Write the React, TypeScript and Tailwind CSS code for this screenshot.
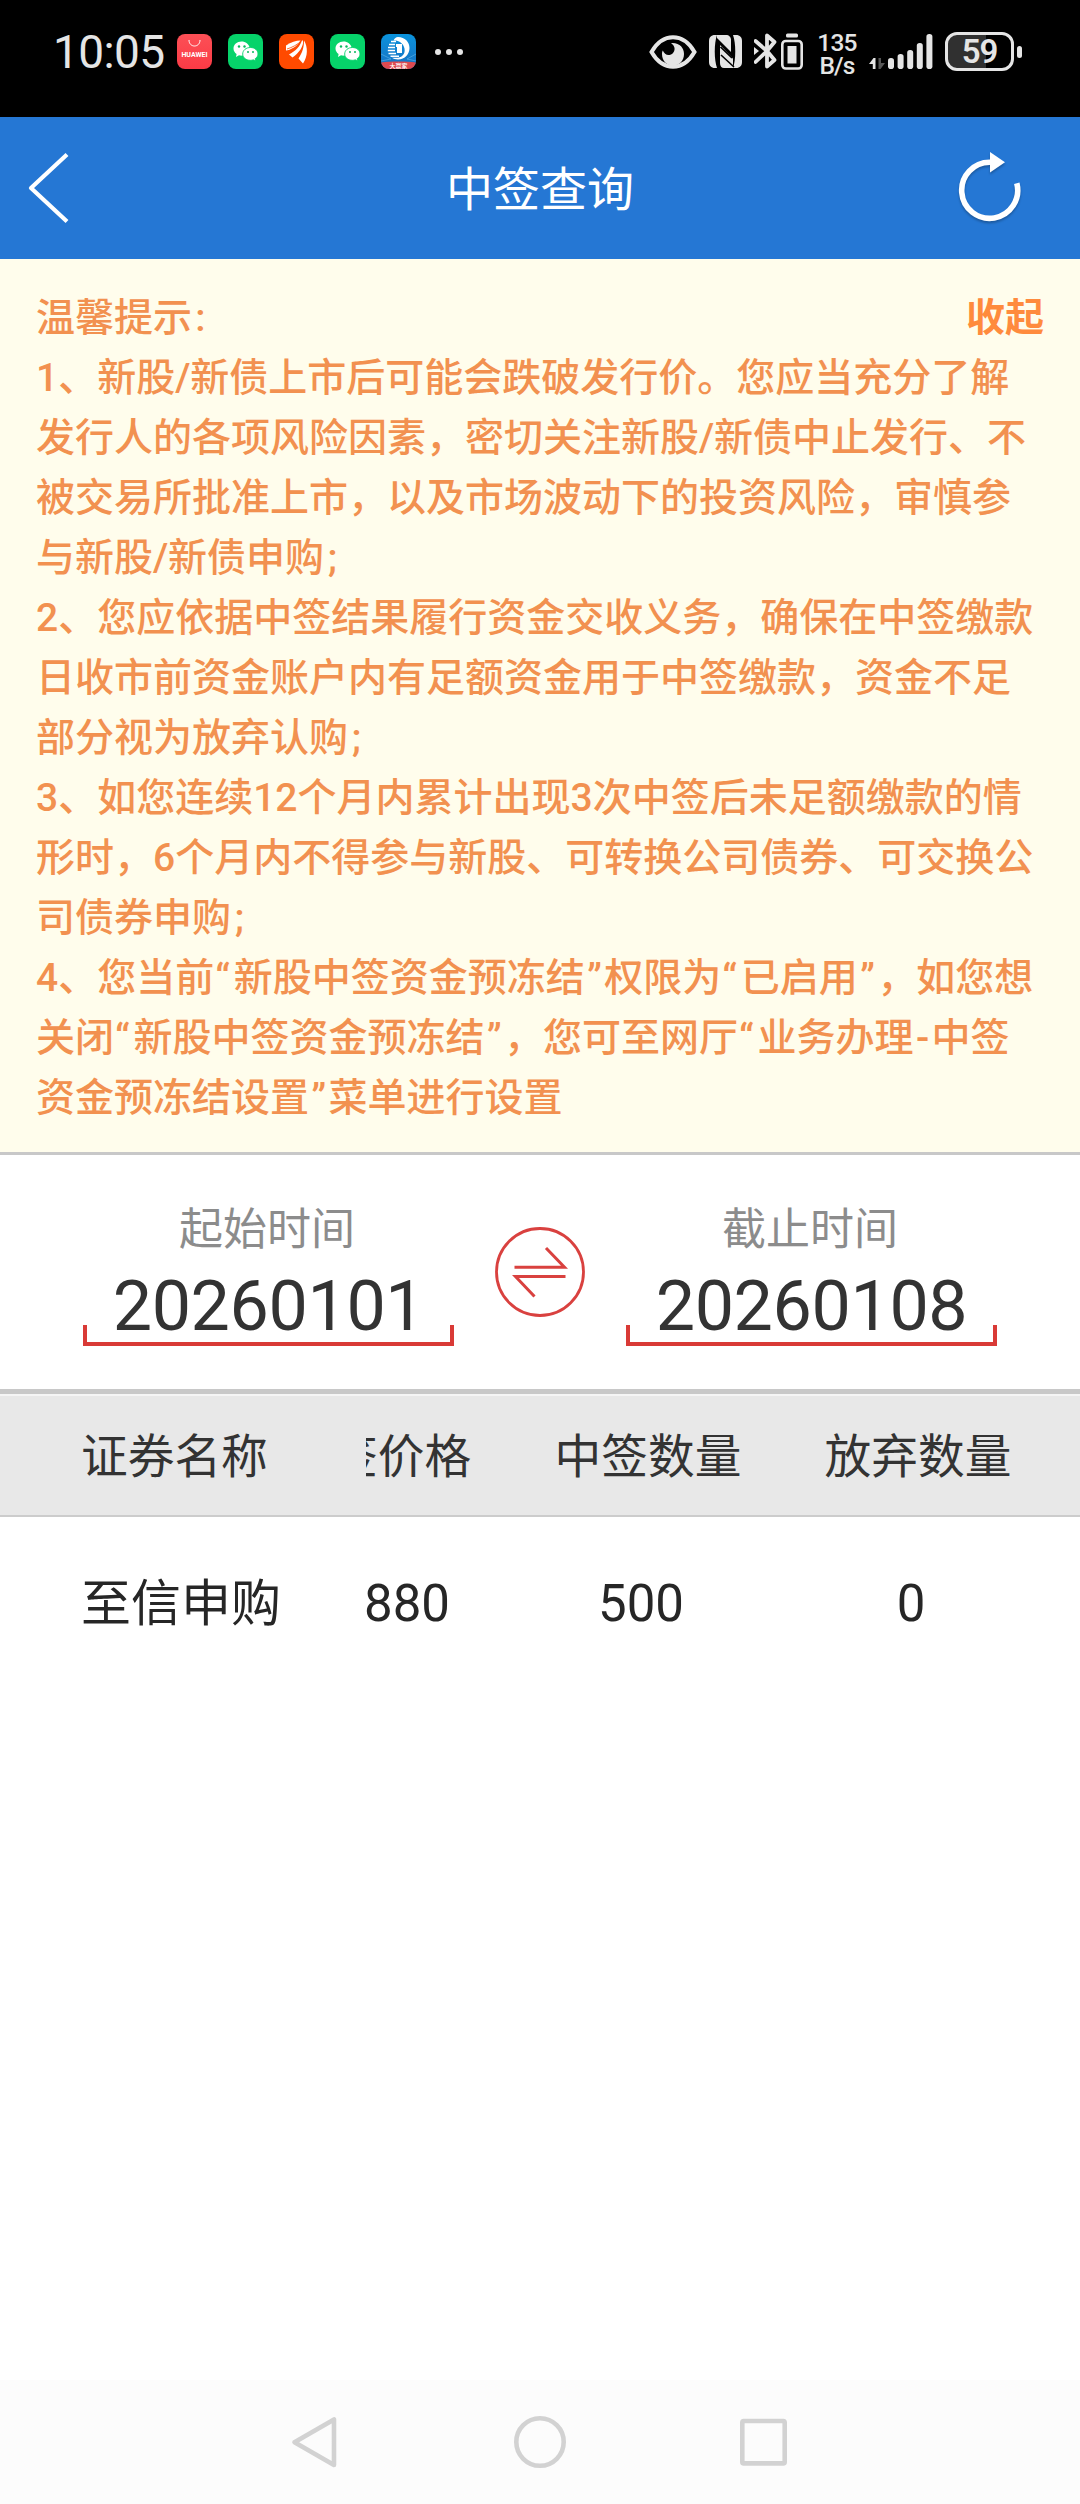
import type { ReactNode } from 'react';

const NOTICE_LINES = [
  '1、新股/新债上市后可能会跌破发行价。您应当充分了解',
  '发行人的各项风险因素，密切关注新股/新债中止发行、不',
  '被交易所批准上市，以及市场波动下的投资风险，审慎参',
  '与新股/新债申购;',
  '2、您应依据中签结果履行资金交收义务，确保在中签缴款',
  '日收市前资金账户内有足额资金用于中签缴款，资金不足',
  '部分视为放弃认购;',
  '3、如您连续12个月内累计出现3次中签后未足额缴款的情',
  '形时，6个月内不得参与新股、可转换公司债券、可交换公',
  '司债券申购;',
  '4、您当前“新股中签资金预冻结”权限为“已启用”，如您想',
  '关闭“新股中签资金预冻结”，您可至网厅“业务办理-中签',
  '资金预冻结设置”菜单进行设置',
];

// Fixed advance widths for the narrow punctuation between Chinese characters
const PUNCTUATION: Record<string, string> = {
  '“': 'w-[19.5px] pl-px text-left',
  '”': 'w-[19.5px] text-center',
  '/': 'w-[15px] text-center',
  '-': 'w-[18px] text-center',
  ':': 'w-[17px] text-center',
  ';': 'w-[17px] text-center',
};

export default function App() {
  return (
    <div className="flex h-[2504px] w-[1080px] flex-col overflow-hidden bg-white font-[Roboto,'Noto_Sans_CJK_SC',sans-serif] text-[#333]">
      <StatusBar />
      <TitleBar />
      <Notice />
      <DateRange />
      <ResultTable />
      <NavigationBar />
    </div>
  );
}

function StatusBar() {
  return (
    <div className="flex h-[117px] shrink-0 items-start bg-black text-[#e5e5e5]">
      <span className="mt-[29px] ml-[53px] w-[124px] text-[46px] leading-[47px] tracking-[-0.6px] whitespace-nowrap">
        10:05
      </span>
      <div className="mt-[34px] flex gap-4">
        <HuaweiIcon />
        <WeChatIcon />
        <FeatherIcon />
        <WeChatIcon />
        <BrokerIcon />
      </div>
      <div className="mt-[49px] ml-[19px] flex gap-[5px]">
        <span className="size-1.5 rounded-full bg-[#e5e5e5]" />
        <span className="size-1.5 rounded-full bg-[#e5e5e5]" />
        <span className="size-1.5 rounded-full bg-[#e5e5e5]" />
      </div>

      <div className="mt-8 mr-[58px] ml-auto flex items-start">
        <svg className="mt-[3px] h-[34px] w-12" viewBox="0 0 48 34" fill="none">
          <path d="M2.500 17C8 7.500 15.500 2.300 24 2.300S40 7.500 45.500 17C40 26.500 32.500 31.700 24 31.700S8 26.500 2.500 17Z" stroke="#e5e5e5" strokeWidth="4" />
          <path d="M23.500 8C31 8 35 13 35 19C35 26 30 30.500 24 30.500S13 26 13 19C13 17.500 13.300 16.500 13.800 15.500C15 18.500 17.500 20.500 20.500 20C25 19.300 27 14 24.500 10.500C23.800 9.500 23 8.800 22 8.200Z" fill="#e5e5e5" />
        </svg>
        <svg className="mt-[3px] ml-3 h-[33px] w-[33px]" viewBox="0 0 33 33">
          <path d="M6 0H8C5 8 5 25 8 33H6C2 33 0 30.500 0 27V6C0 2.500 2 0 6 0Z" fill="#e5e5e5" />
          <path d="M8 0H17C20 0 22 2 22 5V17L8 3Z" fill="#e5e5e5" />
          <path d="M24 0H27C31 0 33 2.500 33 6V27C33 30.500 31 33 27 33H24C27 25 27 8 24 0Z" fill="#e5e5e5" />
          <path d="M11 10L24 23.500V33H15C12.500 33 11 31 11 28Z" fill="#e5e5e5" />
          <path d="M11.500 12L23 23M12 20L25 32" stroke="#000" strokeWidth="1.600" />
        </svg>
        <svg className="mt-px ml-3 h-9 w-[23px]" viewBox="0 0 23 36" fill="none" stroke="#e5e5e5" strokeWidth="3.800" strokeLinejoin="round">
          <path d="M1.500 8L13 18L20.500 9L13 2.500V33.500L20.500 27L13 18L1.500 29" strokeLinecap="round" />
          <path d="M0 14L5 18L0 22Z" fill="#e5e5e5" stroke="none" />
        </svg>
        <svg className="mt-px ml-1 h-[37px] w-[22px]" viewBox="0 0 22 37">
          <rect x="5" y="0.500" width="12" height="4" rx="1.500" fill="#e5e5e5" />
          <rect x="1.300" y="8" width="19.400" height="27.500" rx="3.500" fill="none" stroke="#e5e5e5" strokeWidth="2.600" />
          <rect x="6.500" y="13" width="9" height="17.500" fill="#e5e5e5" />
        </svg>
        <div className="-mt-px ml-3 flex w-11 flex-col items-center text-[24.500px] leading-[23px] font-medium tracking-[-0.8px]">
          <span>135</span>
          <span>B/s</span>
        </div>
        <svg className="mt-px ml-2.5 h-9 w-[66px]" viewBox="0 0 66 36" fill="#e5e5e5">
          <path d="M0 31L4.500 25H6.500V36H3.800V31Z" />
          <path d="M9.500 25H12V30H16L11.500 36H9.500Z" fill="#555" />
          <rect x="19" y="25" width="6" height="11" rx="2.800" />
          <rect x="28.600" y="21" width="6" height="15" rx="2.800" />
          <rect x="38.200" y="17" width="6" height="19" rx="2.800" />
          <rect x="47.800" y="10" width="6" height="26" rx="2.800" />
          <rect x="57.400" y="1" width="6" height="35" rx="2.800" />
        </svg>
        <div className="ml-2.5 flex h-[39px] items-center">
          <div className="flex h-[39px] w-[69px] items-center justify-center overflow-hidden rounded-[12px] border-[3px] border-[#e5e5e5] bg-linear-to-r from-[#303030] from-[61%] to-black to-[61%] text-[33px] leading-none font-semibold tracking-[-1px]">
            59
          </div>
          <span className="ml-[3px] h-3 w-[5px] rounded-full bg-[#e5e5e5]" />
        </div>
      </div>
    </div>
  );
}

function HuaweiIcon() {
  return (
    <div className="flex size-[35px] flex-col items-center rounded-lg bg-linear-to-b from-[#fc4f56] to-[#fb3a45]">
      <svg className="mt-1.5 h-[7px] w-[13px]" viewBox="0 0 13 7" fill="none" stroke="#fff" strokeWidth="1">
        <path d="M1 0C1 8 12 8 12 0" />
      </svg>
      <span className="mt-[3.500px] text-[7px] leading-[8px] font-bold text-white">HUAWEI</span>
    </div>
  );
}

function WeChatIcon() {
  return (
    <svg className="size-[35px]" viewBox="0 0 35 35">
      <rect width="35" height="35" rx="8" fill="#06d36a" />
      <path d="M13.500 7.500C9 7.500 5.500 10.500 5.500 14.500C5.500 16.800 6.700 18.700 8.600 20L8 23L11 21.300C12 21.500 13 21.700 14 21.600C21 21.500 22 18 21.700 14C21 10 17.500 7.500 13.500 7.500Z" fill="#fff" />
      <path d="M22.500 13.500C18 13.500 14.700 16.300 14.700 20S18 26.300 22.500 26.300C23.500 26.300 24.400 26.200 25.300 25.800L27.500 27.200L27.200 24.700C29 23.500 30 21.900 30 20C30 16.300 26.700 13.500 22.500 13.500Z" fill="#fff" stroke="#06d36a" strokeWidth="0.900" />
      <g fill="#07b95c">
        <circle cx="11" cy="12.500" r="1.200" />
        <circle cx="16.500" cy="12.500" r="1.200" />
        <circle cx="20" cy="18" r="1" />
        <circle cx="25" cy="18" r="1" />
      </g>
    </svg>
  );
}

function FeatherIcon() {
  return (
    <svg className="size-[35px]" viewBox="0 0 35 35">
      <rect width="35" height="35" rx="8" fill="#ff4a00" />
      <g fill="#fff">
        <path d="M7 16.500C11 16 18 13 21.500 6.500C17 6.500 12 8 7 11.500Z" />
        <path d="M10 20.500C17 17 21 12 23 6.500L24 6.500C25 12 20 19 13.500 23.500Z" />
        <path d="M19.500 24.500C23.500 18.500 25 13 25 6.500C29 13 29 22 24 29.500Z" />
      </g>
      <path d="M8 15C13 13.500 19 10.500 22.500 6.500" stroke="#ff4a00" strokeWidth="0.800" fill="none" />
    </svg>
  );
}

function BrokerIcon() {
  return (
    <div className="relative size-[35px] overflow-hidden rounded-lg bg-linear-to-b from-[#0a93dc] to-[#1670c2]">
      <svg className="absolute inset-0 size-[35px]" viewBox="0 0 35 35" fill="none">
        <path d="M17 3C24 3 28.500 8 28.500 14S24 25.500 17 25.500C14.500 25.500 12.500 24.800 11 23.800H17C22.500 23 25 18 23 13C21.500 8.500 17 6 12.500 6.500C13.500 4.500 15 3 17 3Z" fill="#fff" />
        <path d="M15 10H21V19H16V13H15Z" fill="#fff" />
        <path d="M10 7.500H15M8 10.500H14M7 13.500H14M6.800 16.500H14M7.500 19.500H15M9.500 22.300H18" stroke="#fff" strokeWidth="1.500" />
        <path d="M0 20L10 25L0 27M35 20L26 25L35 27" stroke="#61b5ea" strokeWidth="0.600" />
        <path d="M0 28.500C10 27.300 25 27.300 35 28.500V35H0Z" fill="#dd4a50" />
      </svg>
      <span className="absolute bottom-0 left-0 w-full text-center text-[6px] leading-[7px] font-medium text-white">
        大赢家
      </span>
    </div>
  );
}

function TitleBar() {
  return (
    <header className="grid h-[142px] shrink-0 grid-cols-[1fr_auto_1fr] items-center bg-[#2577d4] pr-[53px] pl-[53px] text-white">
      <svg className="-ml-7 h-[72px] w-[76px]" viewBox="0 0 76 72" fill="none" stroke="#fff" strokeWidth="4.200">
        <path d="M42 2.500L6 36L42 69.500" strokeLinejoin="round" />
      </svg>
      <h1 className="pt-0.5 text-[47px] leading-none">中签查询</h1>
      <svg className="-mr-px h-[76px] w-[76px] justify-self-end drop-shadow-[0_2px_1px_rgba(0,0,0,0.25)]" viewBox="0 0 76 76">
        <path d="M38 12.300A28 28 0 1 0 64.800 33.300" fill="none" stroke="#fff" strokeWidth="5.600" />
        <path d="M38 2L53 12.300L38 22.500Z" fill="#fff" />
      </svg>
    </header>
  );
}

function NoticeLine({ text }: { text: string }) {
  return (
    <p className="h-[60px] whitespace-nowrap">
      {text.split(/([“”/:;-])/).map((part, i) =>
        PUNCTUATION[part] ? (
          <span key={i} className={`inline-block ${PUNCTUATION[part]}`}>
            {part}
          </span>
        ) : (
          part
        ),
      )}
    </p>
  );
}

function Notice() {
  return (
    <section className="h-[896px] shrink-0 border-b-[3px] border-[#c8c8c8] bg-[#fffdec] px-9 pt-[29px] text-[39px] leading-[60px] font-medium text-[#f29150]">
      <div className="flex h-[60px] justify-between">
        <NoticeLine text="温馨提示:" />
        <button className="font-bold text-[#ff8b3d]">收起</button>
      </div>
      {NOTICE_LINES.map((line) => (
        <NoticeLine key={line} text={line} />
      ))}
    </section>
  );
}

function DateField({ label, value }: { label: string; value: string }) {
  return (
    <div className="flex w-[371px] flex-col items-center">
      <span className="pr-[3px] text-[44px] leading-[60px] text-[#8c8c8c]">{label}</span>
      <span className="mt-[9px] h-[74px] text-[70px] leading-[74px] tracking-[-0.4px] text-[#333]">{value}</span>
      <span className="-mt-[18px] h-[21px] w-full border-4 border-t-0 border-[#d93a36]" />
    </div>
  );
}

function DateRange() {
  return (
    <section className="flex h-[239px] shrink-0 items-start justify-between border-b-[5px] border-[#c8c8c8] px-[83px] pt-[45px]">
      <DateField label="起始时间" value="20260101" />
      <svg className="mt-[27px] size-[90px]" viewBox="0 0 90 90" fill="none" stroke="#d9413f">
        <circle cx="45" cy="45" r="43.500" strokeWidth="2.800" />
        <path d="M19.500 40.300H69.500L51 21M70.500 49.500H20.500L39.500 69.500" strokeWidth="3" />
      </svg>
      <DateField label="截止时间" value="20260108" />
    </section>
  );
}

function Cell({ children }: { children: ReactNode }) {
  return <span className="w-[270px] shrink-0 text-center">{children}</span>;
}

function ResultTable() {
  return (
    <section className="flex-1">
      <div className="flex h-[123px] items-center border-t-2 border-b-2 border-t-[#f5f5f5] border-b-[#ccc] bg-[#e8e8e8] pt-[3px] text-[46.700px] leading-[60px]">
        <span className="w-[283px] pl-[81px]">证券名称</span>
        <div className="ml-[83px] flex h-[60px] w-[714px] overflow-hidden">
          {/* first column is scrolled under the fixed name column */}
          <span className="-ml-[35px] w-[182px] shrink-0 text-left">签价格</span>
          <Cell>中签数量</Cell>
          <Cell>放弃数量</Cell>
        </div>
      </div>
      <div className="flex h-[173px] items-center text-[51px] leading-[60px] text-[#262626]">
        <span className="w-[283px] pl-[81px] text-[50px]">至信申购</span>
        <div className="ml-[83px] flex h-[60px] w-[714px] overflow-hidden">
          <span className="-ml-[2px] w-[142px] shrink-0 text-left">880</span>
          <Cell>500</Cell>
          <Cell>0</Cell>
        </div>
      </div>
    </section>
  );
}

function NavigationBar() {
  return (
    <nav className="flex h-[124px] shrink-0 items-center justify-center gap-[172px] bg-[#fcfcfc]">
      <svg className="size-[52px]" viewBox="0 0 52 52" fill="none" stroke="#d2d2d2" strokeWidth="4.600" strokeLinejoin="round">
        <path d="M44 3.500V49L4.500 26.200Z" />
      </svg>
      <svg className="size-[52px]" viewBox="0 0 52 52" fill="none" stroke="#d2d2d2" strokeWidth="4.600">
        <circle cx="26" cy="26" r="23.700" />
      </svg>
      <svg className="size-[52px]" viewBox="0 0 52 52" fill="none" stroke="#d2d2d2" strokeWidth="4.600">
        <rect x="4.300" y="5" width="42.400" height="42.400" rx="1.500" />
      </svg>
    </nav>
  );
}
